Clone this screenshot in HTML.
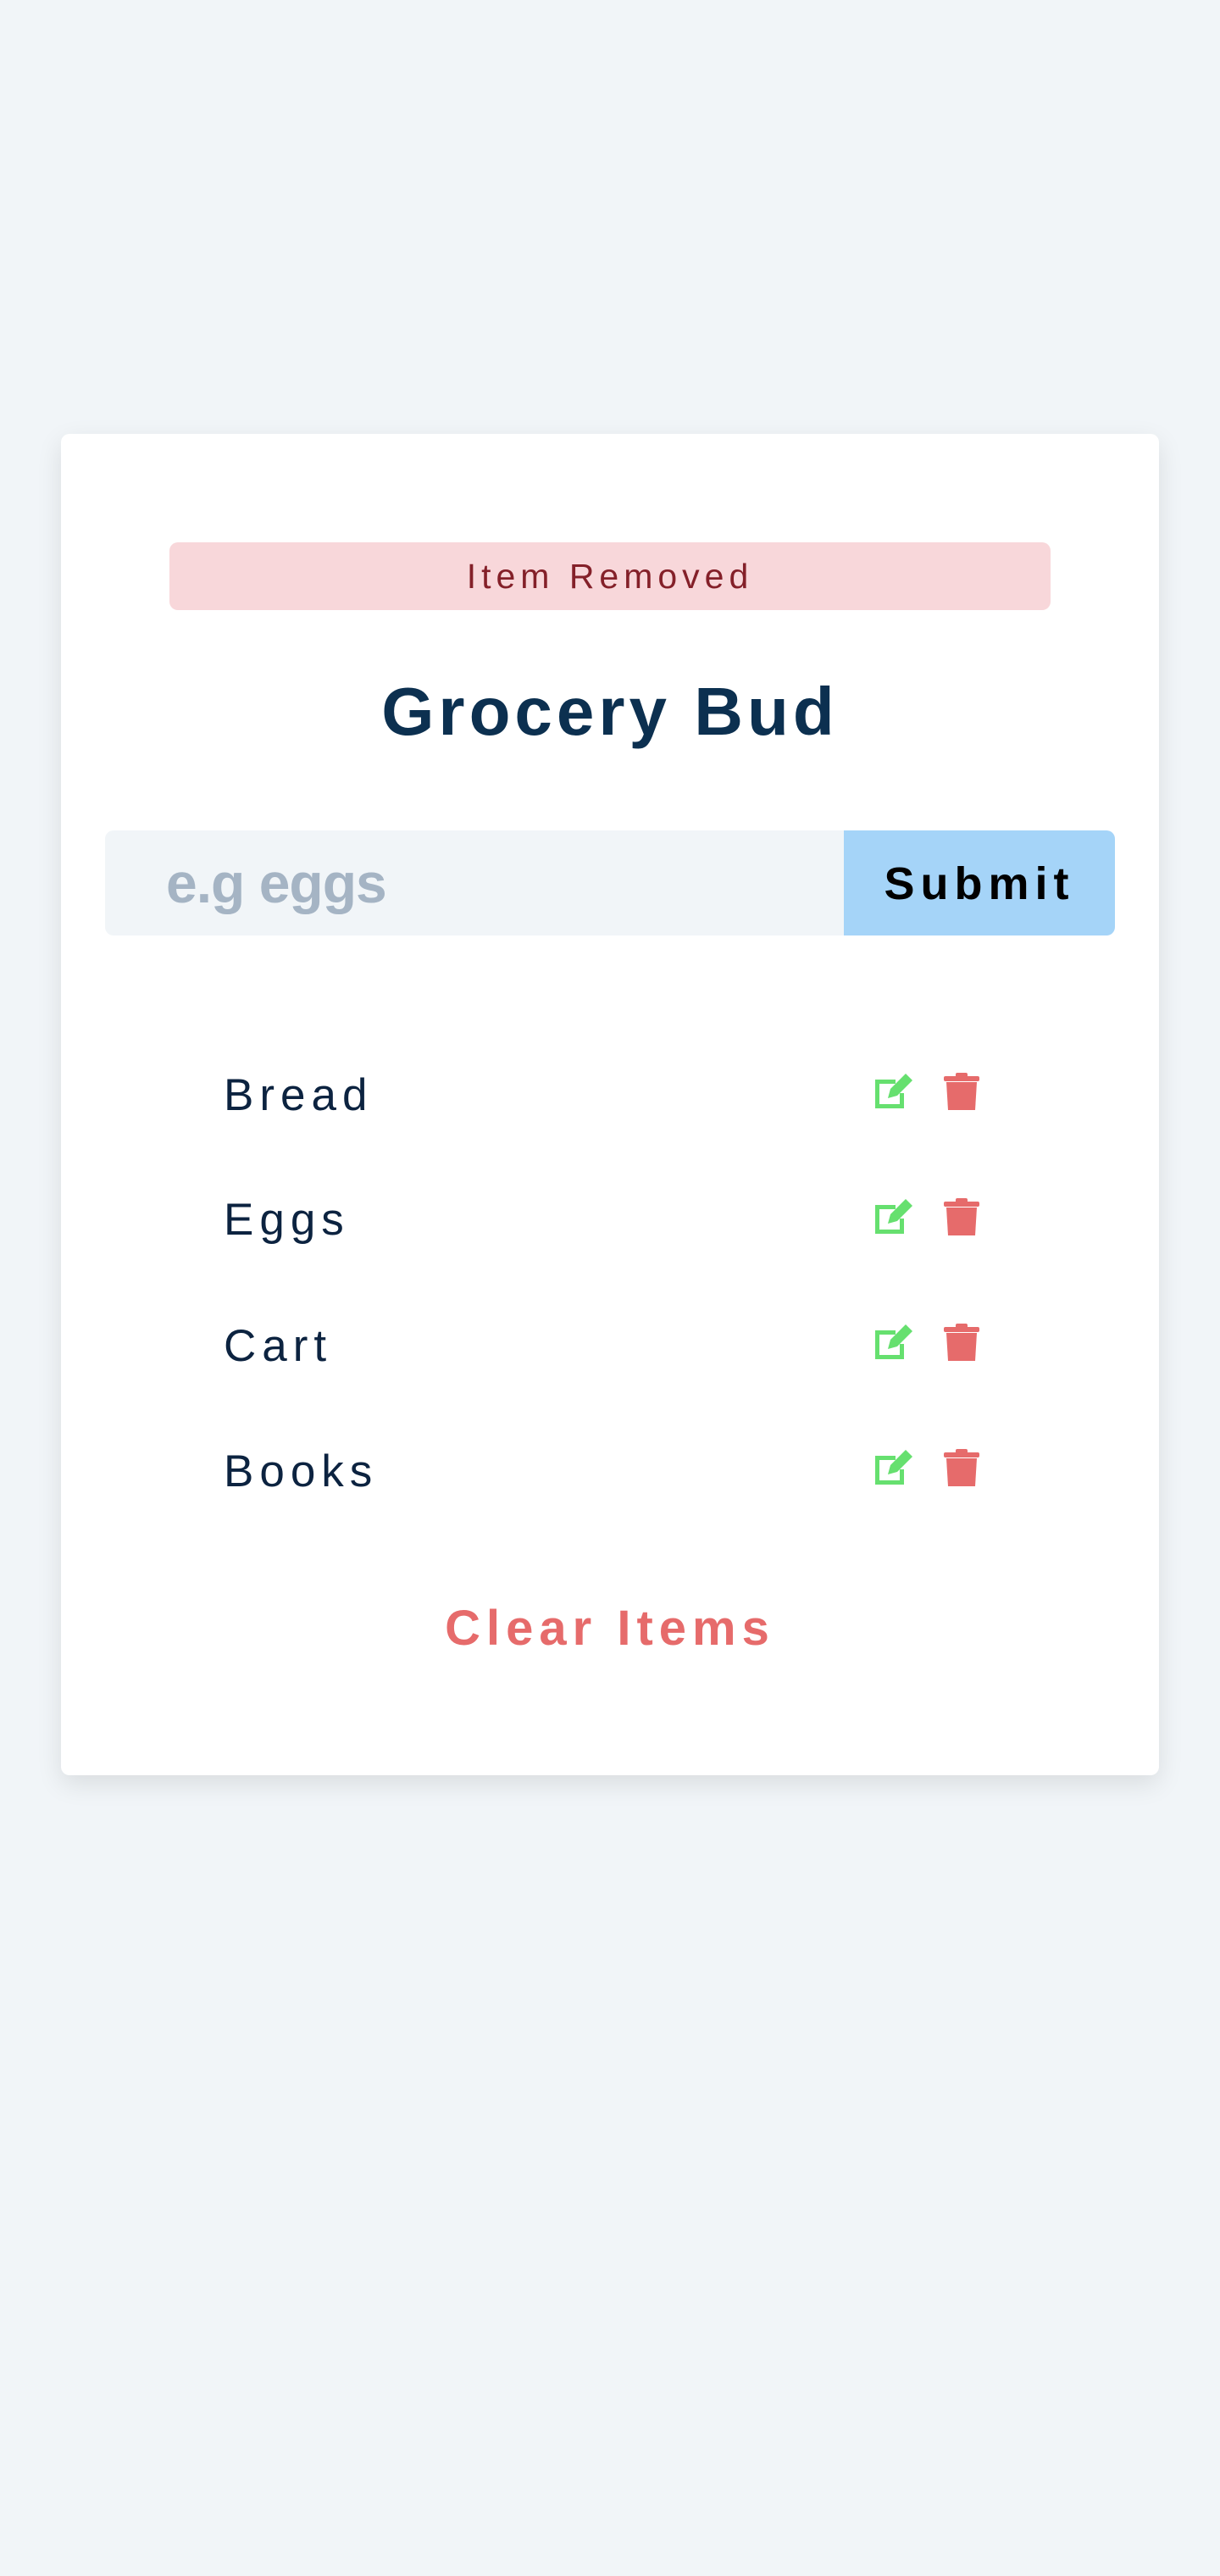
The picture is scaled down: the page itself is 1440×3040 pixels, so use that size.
<!DOCTYPE html>
<html><head><meta charset="utf-8"><style>
*{margin:0;padding:0;box-sizing:border-box}
body{width:1440px;height:3040px;background:#f1f5f8;font-family:"Liberation Sans",sans-serif;position:relative;overflow:hidden}
.card{position:absolute;left:72px;top:512px;width:1296px;height:1583px;background:#fff;border-radius:10px;box-shadow:0 10px 30px rgba(0,0,0,0.1)}
.alert{position:absolute;left:200px;top:640px;width:1040px;height:80px;background:#f8d7da;border-radius:10px;color:#842029;font-size:41px;letter-spacing:6px;text-align:center;line-height:80px}
.title{position:absolute;left:0;width:1440px;top:790px;text-align:center;font-size:80px;font-weight:bold;color:#0c3050;letter-spacing:5px;line-height:100px}
.input{position:absolute;left:124px;top:980px;width:872px;height:124px;background:#f1f5f8;border-radius:10px 0 0 10px}
.ph{position:absolute;left:196px;top:980px;line-height:124px;font-size:66px;font-weight:bold;color:#a5b4c4;letter-spacing:-1px}
.btn{position:absolute;left:996px;top:980px;width:320px;height:124px;background:#a5d4f8;border-radius:0 10px 10px 0;font-size:54px;font-weight:bold;letter-spacing:7px;text-align:center;line-height:126px;color:#000}
.item{position:absolute;left:264px;font-size:53px;letter-spacing:7px;color:#0c2340;line-height:60px}
.ic{position:absolute}
.clear{position:absolute;left:0;width:1440px;top:1890px;text-align:center;font-size:58px;font-weight:bold;color:#e66b6b;letter-spacing:7px;line-height:64px}
</style></head><body>
<div class="card"></div>
<div class="alert">Item Removed</div>
<div class="title">Grocery Bud</div>
<div class="input"></div>
<div class="ph">e.g eggs</div>
<div class="btn">Submit</div>

<div class="item" style="top:1263px">Bread</div>
<div class="item" style="top:1410px">Eggs</div>
<div class="item" style="top:1559px">Cart</div>
<div class="item" style="top:1707px">Books</div>

<svg class="ic" style="left:1032px;top:1265px" width="48" height="46" viewBox="0 0 48 46"><path d="M1 9h24v5H6v24h24V25h5v18H1z" fill="#66e06f"/><path d="M37 2l8 8-18 18-11 3 3-11z" fill="#66e06f"/></svg>
<svg class="ic" style="left:1113px;top:1265px" width="44" height="46" viewBox="0 0 44 46"><rect x="1" y="5" width="42" height="6" rx="2" fill="#e66b6b"/><rect x="15" y="1" width="14" height="7" rx="2" fill="#e66b6b"/><path d="M4 12h36l-2 33H6z" fill="#e66b6b"/></svg>

<svg class="ic" style="left:1032px;top:1413px" width="48" height="46" viewBox="0 0 48 46"><path d="M1 9h24v5H6v24h24V25h5v18H1z" fill="#66e06f"/><path d="M37 2l8 8-18 18-11 3 3-11z" fill="#66e06f"/></svg>
<svg class="ic" style="left:1113px;top:1413px" width="44" height="46" viewBox="0 0 44 46"><rect x="1" y="5" width="42" height="6" rx="2" fill="#e66b6b"/><rect x="15" y="1" width="14" height="7" rx="2" fill="#e66b6b"/><path d="M4 12h36l-2 33H6z" fill="#e66b6b"/></svg>

<svg class="ic" style="left:1032px;top:1561px" width="48" height="46" viewBox="0 0 48 46"><path d="M1 9h24v5H6v24h24V25h5v18H1z" fill="#66e06f"/><path d="M37 2l8 8-18 18-11 3 3-11z" fill="#66e06f"/></svg>
<svg class="ic" style="left:1113px;top:1561px" width="44" height="46" viewBox="0 0 44 46"><rect x="1" y="5" width="42" height="6" rx="2" fill="#e66b6b"/><rect x="15" y="1" width="14" height="7" rx="2" fill="#e66b6b"/><path d="M4 12h36l-2 33H6z" fill="#e66b6b"/></svg>

<svg class="ic" style="left:1032px;top:1709px" width="48" height="46" viewBox="0 0 48 46"><path d="M1 9h24v5H6v24h24V25h5v18H1z" fill="#66e06f"/><path d="M37 2l8 8-18 18-11 3 3-11z" fill="#66e06f"/></svg>
<svg class="ic" style="left:1113px;top:1709px" width="44" height="46" viewBox="0 0 44 46"><rect x="1" y="5" width="42" height="6" rx="2" fill="#e66b6b"/><rect x="15" y="1" width="14" height="7" rx="2" fill="#e66b6b"/><path d="M4 12h36l-2 33H6z" fill="#e66b6b"/></svg>

<div class="clear">Clear Items</div>
</body></html>
